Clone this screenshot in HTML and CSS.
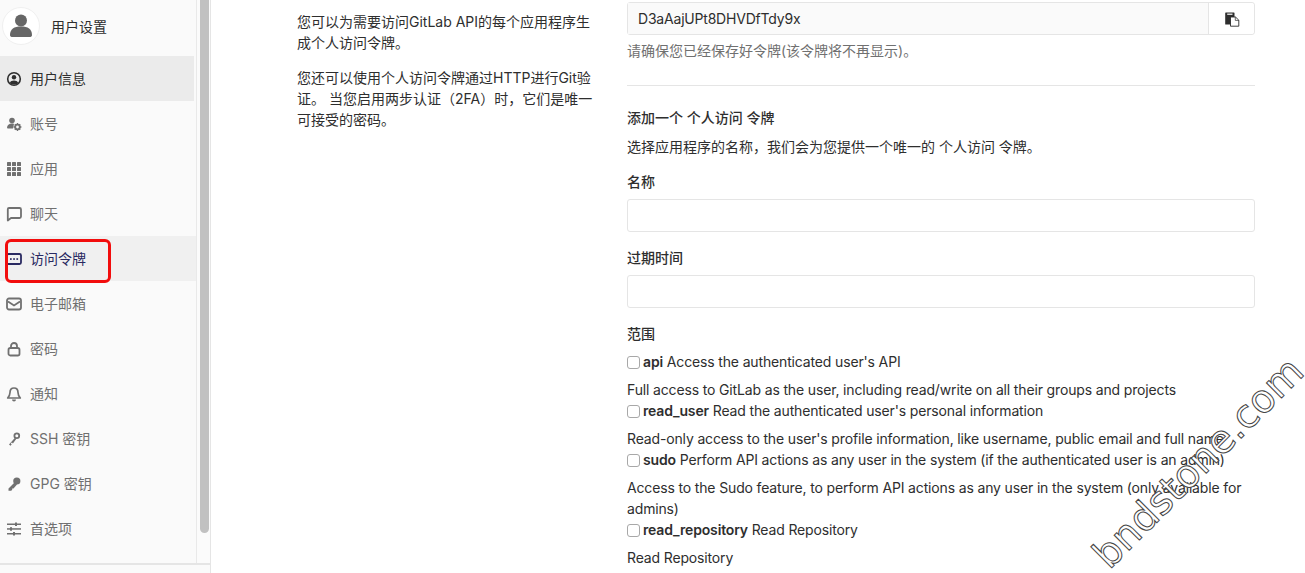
FILE: index.html
```html
<!doctype html>
<html lang="zh-CN">
  <head>
    <meta charset="utf-8" />
    <title>访问令牌</title>
    <link rel="stylesheet" href="styles.css">
  </head>
  <body>
<div class="page">

<aside class="sidebar">
  <div class="sideInner">
    <nav class="nav">
      <div class="navHead">
        <span class="avatar">
          <svg width="26" height="26" viewBox="0 0 26 26"><circle cx="13" cy="7.5" r="6" fill="#666"/><path d="M2 22c0-6 4-8.500 11-8.500s11 2.500 11 8.500c0 1.500-1 2-2.500 2h-17C3 24 2 23.500 2 22z" fill="#666"/></svg>
        </span>
        <span class="navTitle">用户设置</span>
      </div>
      <a class="navItem active">
        <svg width="16" height="16" viewBox="0 0 16 16"><circle cx="8" cy="8" r="6.300" fill="none" stroke="currentColor" stroke-width="1.600"/><circle cx="8" cy="6.200" r="2.200" fill="currentColor"/><path d="M3.800 12c.6-2 2.300-2.600 4.200-2.600s3.600.6 4.200 2.600c-2 2-6.400 2-8.400 0z" fill="currentColor"/></svg>
        用户信息
      </a>
      <a class="navItem">
        <svg width="16" height="16" viewBox="0 0 16 16"><circle cx="6" cy="4.500" r="2.800" fill="currentColor"/><path d="M1 12c0-3 2-4.500 5-4.500 1 0 1.500.2 2 .4L7 12.500H2c-.7 0-1-.2-1-.5z" fill="currentColor"/><circle cx="11.500" cy="11" r="2.300" fill="none" stroke="currentColor" stroke-width="1.800"/><path d="M11.500 7v1.500M11.500 13.500V15M7.600 11h1.500M13.900 11h1.500M8.800 8.300l1 1M13.200 12.700l1 1M14.200 8.300l-1 1M9.800 12.700l-1 1" stroke="currentColor" stroke-width="1.400"/></svg>
        账号
      </a>
      <a class="navItem">
        <svg width="16" height="16" viewBox="0 0 16 16" fill="currentColor"><rect x="1" y="1" width="4" height="4" rx=".5"/><rect x="6" y="1" width="4" height="4" rx=".5"/><rect x="11" y="1" width="4" height="4" rx=".5"/><rect x="1" y="6" width="4" height="4" rx=".5"/><rect x="6" y="6" width="4" height="4" rx=".5"/><rect x="11" y="6" width="4" height="4" rx=".5"/><rect x="1" y="11" width="4" height="4" rx=".5"/><rect x="6" y="11" width="4" height="4" rx=".5"/><rect x="11" y="11" width="4" height="4" rx=".5"/></svg>
        应用
      </a>
      <a class="navItem">
        <svg width="16" height="16" viewBox="0 0 16 16"><path d="M3 2h10.500A1.500 1.500 0 0 1 15 3.500v7a1.500 1.500 0 0 1-1.500 1.500H5l-3.200 2.500V3.200A1.200 1.200 0 0 1 3 2z" fill="none" stroke="currentColor" stroke-width="1.800" stroke-linejoin="round"/></svg>
        聊天
      </a>
      <a class="navItem current">
        <svg width="16" height="16" viewBox="0 0 16 16"><rect x="1" y="3" width="14" height="10" rx="1.500" fill="none" stroke="currentColor" stroke-width="1.800"/><rect x="4" y="7.200" width="1.700" height="1.700" fill="currentColor"/><rect x="7.200" y="7.200" width="1.700" height="1.700" fill="currentColor"/><rect x="10.400" y="7.200" width="1.700" height="1.700" fill="currentColor"/></svg>
        访问令牌
      </a>
      <a class="navItem">
        <svg width="16" height="16" viewBox="0 0 16 16"><rect x="1" y="2.500" width="14" height="11" rx="2" fill="none" stroke="currentColor" stroke-width="1.800"/><path d="M2 5.500l6 4 6-4" fill="none" stroke="currentColor" stroke-width="1.800"/></svg>
        电子邮箱
      </a>
      <a class="navItem">
        <svg width="16" height="16" viewBox="0 0 16 16"><rect x="2.500" y="7" width="11" height="7.500" rx="1.800" fill="none" stroke="currentColor" stroke-width="1.800"/><path d="M5 7V5a3 3 0 0 1 6 0v2" fill="none" stroke="currentColor" stroke-width="1.800"/></svg>
        密码
      </a>
      <a class="navItem">
        <svg width="16" height="16" viewBox="0 0 16 16"><path d="M8 2c-2.800 0-4 2-4 4.500 0 2.500-1 4-2.300 5.500h12.600C13 10.500 12 9 12 6.500 12 4 10.800 2 8 2z" fill="none" stroke="currentColor" stroke-width="1.700" stroke-linejoin="round"/><path d="M6 13.500a2 2 0 0 0 4 0z" fill="currentColor"/></svg>
        通知
      </a>
      <a class="navItem">
        <svg width="16" height="16" viewBox="0 0 16 16"><circle cx="10.800" cy="4.700" r="2.400" fill="none" stroke="currentColor" stroke-width="1.800"/><path d="M9 6.700L3 13.500l1.500 1.300 1.200-1.300-1-1 1.200-1.100 1 1 3.500-4.600z" fill="currentColor"/></svg>
        SSH 密钥
      </a>
      <a class="navItem">
        <svg width="16" height="16" viewBox="0 0 16 16"><circle cx="10.800" cy="5" r="3.600" fill="currentColor"/><path d="M9 6L2.500 12.500v2.300h2.700l1-1v-1.200h1.300l3.500-4z" fill="currentColor"/></svg>
        GPG 密钥
      </a>
      <a class="navItem">
        <svg width="16" height="16" viewBox="0 0 16 16" fill="currentColor"><rect x="1" y="2.500" width="14" height="1.500"/><rect x="1" y="7.200" width="14" height="1.500"/><rect x="1" y="12" width="14" height="1.500"/><rect x="9" y="1.500" width="2" height="3.500"/><rect x="4" y="6.200" width="2" height="3.500"/><rect x="7" y="11" width="2" height="3.500"/></svg>
        首选项
      </a>
    </nav>
    <div class="scrollTrack"><div class="scrollThumb"></div></div>
  </div>
  <div class="sideFoot"></div>
</aside>

<main class="content">
  <div class="intro">
    <p>您可以为需要访问GitLab API的每个应用程序生成个人访问令牌。</p>
    <p>您还可以使用个人访问令牌通过HTTP进行Git验证。 当您启用两步认证（2FA）时，它们是唯一可接受的密码。</p>
  </div>

  <div class="formCol">
    <div class="tokenGroup">
      <div class="tokenValue">D3aAajUPt8DHVDfTdy9x</div>
      <button class="copyBtn">
        <svg width="16" height="16" viewBox="0 0 16 16"><rect x="1.200" y="1.500" width="9.300" height="12" rx=".6" fill="#2e2e2e"/><rect x="3.200" y="2.600" width="5.300" height="1.200" fill="#fff"/><path d="M6.500 6h5l3.300 3.200v6h-8.300z" fill="#fff" stroke="#2e2e2e" stroke-width=".9"/><path d="M11.300 6v3.400h3.500" fill="none" stroke="#2e2e2e" stroke-width=".7"/></svg>
      </button>
    </div>
    <p class="hint">请确保您已经保存好令牌(该令牌将不再显示)。</p>
    <hr class="rule">

    <h5>添加一个 个人访问 令牌</h5>
    <p class="lead">选择应用程序的名称，我们会为您提供一个唯一的 个人访问 令牌。</p>

    <label class="fieldLabel">名称</label>
    <input class="textInput" type="text">

    <label class="fieldLabel">过期时间</label>
    <input class="textInput" type="text">

    <label class="fieldLabel">范围</label>

    <div class="scope"><input type="checkbox"><b>api</b> Access the authenticated user's API</div>
    <p class="scopeHelp">Full access to GitLab as the user, including read/write on all their groups and projects</p>
    <div class="scope"><input type="checkbox"><b>read_user</b> Read the authenticated user's personal information</div>
    <p class="scopeHelp">Read-only access to the user's profile information, like username, public email and full name</p>
    <div class="scope"><input type="checkbox"><b>sudo</b> Perform API actions as any user in the system (if the authenticated user is an admin)</div>
    <p class="scopeHelp">Access to the Sudo feature, to perform API actions as any user in the system (only available for admins)</p>
    <div class="scope"><input type="checkbox"><b>read_repository</b> Read Repository</div>
    <p class="scopeHelp">Read Repository</p>
  </div>
</main>

</div>

<div class="redBox"></div>
<div class="watermark">bndstone.com</div>
</body>
</html>
```

FILE: styles.css
```css
* {
  box-sizing: border-box;
}

html, body {
  margin: 0;
  height: 573px;
  overflow: hidden;
}

body {
  position: relative;
  background-color: #fff;
  color: #2e2e2e;
  font-family: Inter, "Noto Sans CJK SC", sans-serif;
  font-size: 14px;
  line-height: 21px;
}

.page {
  display: flex;
  height: 573px;
}

/* sidebar */
.sidebar {
  width: 211px;
  flex: none;
  display: flex;
  flex-direction: column;
  background-color: #fafafa;
  border-right: 1px solid #e5e5e5;
}

.sideInner {
  flex: none;
  height: 563px;
  display: flex;
}

.nav {
  width: 197px;
  flex: none;
  border-right: 1px solid #e9e9e9;
}

.navHead {
  height: 56px;
  display: flex;
  align-items: center;
  padding-left: 2px;
  padding-bottom: 4px;
}

.avatar {
  width: 38px;
  height: 38px;
  border-radius: 50%;
  background-color: #fff;
  border: 1px solid #f0f0f0;
  display: flex;
  align-items: center;
  justify-content: center;
}

.navTitle {
  margin-left: 11px;
  color: #2e2e2e;
}

.navItem {
  height: 45px;
  display: flex;
  align-items: center;
  padding-left: 6px;
  color: #707070;
}

.navItem svg {
  margin-right: 8px;
  flex: none;
}

.active {
  background-color: #ebebeb;
  color: #2e2e2e;
  margin-right: 2px;
}

.current {
  background-color: #f0f0f0;
  color: #292961;
}

.scrollTrack {
  flex: 1;
  padding: 0 1px 0 3px;
  background-color: #fbfbfb;
}

.scrollThumb {
  width: 9px;
  height: 533px;
  background-color: #c1c1c1;
  border-radius: 0 0 5px 5px;
}

.sideFoot {
  flex: 1;
  border-top: 2px solid #e5e5e5;
}

/* main */
.content {
  flex: 1;
  display: flex;
  padding-left: 86px;
  padding-right: 50px;
  align-items: flex-start;
}

.intro {
  width: 296px;
  flex: none;
  padding-top: 11px;
}

.intro p {
  margin: 0 0 14px;
}

.formCol {
  flex: 1;
  margin-left: 34px;
  padding-top: 2px;
}

.tokenGroup {
  display: flex;
  height: 33px;
  border: 1px solid #e5e5e5;
  border-radius: 3px;
}

.tokenValue {
  flex: 1;
  padding: 5px 10px;
  background-color: #fafafa;
  border-right: 1px solid #e5e5e5;
  letter-spacing: -0.2px;
}

.copyBtn {
  width: 45px;
  border: none;
  background-color: #fff;
  border-radius: 0 3px 3px 0;
  padding: 0;
  display: flex;
  align-items: center;
  justify-content: center;
}

.hint {
  margin: 5px 0 0;
  color: #707070;
}

.rule {
  border: none;
  border-top: 1px solid #e5e5e5;
  margin: 24px 0 21px;
}

h5 {
  margin: 0;
  font-size: 14px;
  font-weight: 500;
}

.lead {
  margin: 8px 0 14px;
}

.fieldLabel {
  display: block;
  font-weight: 500;
  margin-bottom: 7px;
}

.textInput {
  display: block;
  width: 100%;
  height: 33px;
  border: 1px solid #e5e5e5;
  border-radius: 3px;
  background-color: #fff;
  margin-bottom: 15px;
}

.scope, .scopeHelp {
  letter-spacing: -0.15px;
}

.scope input {
  appearance: none;
  width: 13px;
  height: 13px;
  margin: 0 3px 0 0;
  border: 1px solid #a8a8a8;
  border-radius: 3px;
  background-color: #fff;
  vertical-align: -2px;
}

.scope b {
  font-weight: 600;
}

.scopeHelp {
  margin: 7px 0 0;
}

/* annotations over the screenshot */
.redBox {
  position: absolute;
  left: 5px;
  top: 239px;
  width: 106px;
  height: 44px;
  border: 3px solid #f20d0d;
  border-radius: 6px;
}

.watermark {
  position: absolute;
  left: 1110px;
  top: 530px;
  font-family: "DejaVu Sans", sans-serif;
  font-size: 39px;
  line-height: 54px;
  color: #fff;
  -webkit-text-stroke: 1px #444;
  transform-origin: 0 41px;
  transform: rotate(-45deg);
  white-space: nowrap;
}
```
